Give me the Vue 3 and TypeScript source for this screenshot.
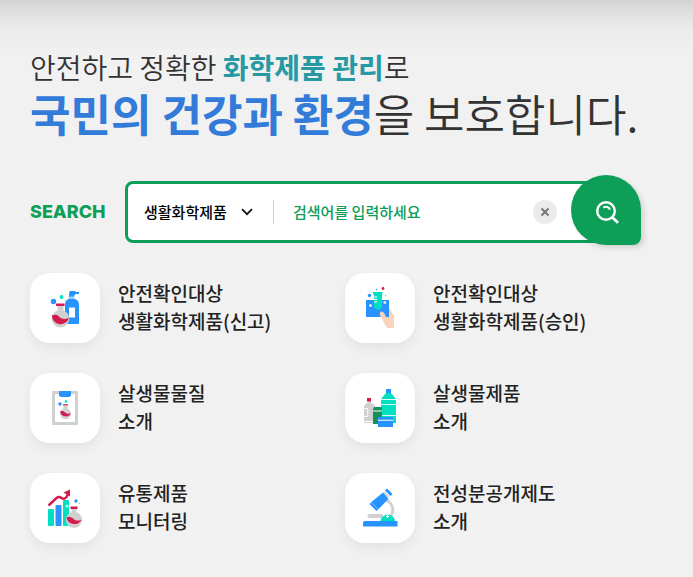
<script setup lang="ts">
import { ref } from 'vue'

interface MenuItem {
  icon: string
  lines: [string, string]
}

const category = ref('생활화학제품')
const keyword = ref('')

const items: MenuItem[] = [
  { icon: 'report', lines: ['안전확인대상', '생활화학제품(신고)'] },
  { icon: 'approve', lines: ['안전확인대상', '생활화학제품(승인)'] },
  { icon: 'substance', lines: ['살생물물질', '소개'] },
  { icon: 'product', lines: ['살생물제품', '소개'] },
  { icon: 'monitor', lines: ['유통제품', '모니터링'] },
  { icon: 'microscope', lines: ['전성분공개제도', '소개'] },
]
</script>

<template>
  <main class="hero">
    <h1 class="headline">
      <span class="lead">안전하고 정확한 <strong>화학제품 관리</strong>로</span>
      <span class="main"><strong>국민의 건강과 환경</strong>을 보호합니다.</span>
    </h1>

    <form class="search" @submit.prevent>
      <label class="search-title" for="keyword">SEARCH</label>
      <div class="search-box">
        <div class="category">
          <select v-model="category" aria-label="검색 분류">
            <option>생활화학제품</option>
          </select>
          <svg class="chevron" width="12" height="8" viewBox="0 0 12 8" aria-hidden="true">
            <path d="M1 1.2 6 6.2 11 1.2" fill="none" stroke="#111" stroke-width="1.7" />
          </svg>
        </div>
        <input id="keyword" v-model="keyword" type="text" placeholder="검색어를 입력하세요" />
        <button class="clear" type="button" aria-label="지우기" @click="keyword = ''">
          <svg width="10" height="10" viewBox="0 0 10 10" aria-hidden="true">
            <path d="M1.5 1.5 8.5 8.5M8.5 1.5 1.5 8.5" stroke="#777" stroke-width="2" />
          </svg>
        </button>
      </div>
      <button class="submit" type="submit" aria-label="검색">
        <svg width="24" height="24" viewBox="0 0 24 24" fill="none" stroke="#fff" aria-hidden="true">
          <circle cx="11" cy="11" r="8.8" stroke-width="2.4" />
          <path d="M17.2 17.2 23 22.8" stroke-width="2.8" />
          <path d="M8.3 7.4C11 6 14 6.900 15 9.600" stroke-width="2.2" />
        </svg>
      </button>
    </form>

    <ul class="menu">
      <li v-for="item in items" :key="item.icon">
        <a href="#">
          <span class="tile">
            <svg v-if="item.icon === 'report'" viewBox="0 0 70 70" aria-hidden="true">
              <path fill="#2793ff" d="M39.500 18h6v1H49v2h-3.500l-1.500 2v2h-5v-3zM38.500 26h6.500c3 1 4 3 4 6v19H35V32c0-3 1-5 3.500-6z" />
              <path fill="#9dcfff" d="M38.500 23.500h6V26h-6z" />
              <path fill="#fff" d="M39 34.500h6v10h-6z" />
              <path fill="#d0d0d0" d="M27.500 33h6v4.500a8.700 8.700 0 1 1-6 0z" />
              <path fill="#d31b4e" d="M26 30.500h8.500v2.500H26zM21.900 42.500c3.500-1.500 5.500-.5 7.600 1.500 2.500 2.500 5.500 2.500 9.500.8A8.700 8.700 0 0 1 21.900 42.500z" />
              <circle cx="23.500" cy="28.500" r="2.700" fill="#2793ff" />
              <circle cx="31.500" cy="24" r="1.900" fill="#00dfc0" />
              <circle cx="35.500" cy="27.500" r=".8" fill="#8bdde8" />
            </svg>

            <svg v-else-if="item.icon === 'approve'" viewBox="0 0 70 70" aria-hidden="true">
              <path fill="#2793ff" d="M21 27h23v17H21z" />
              <path fill="#fad3bd" d="M44 35l3 4 2 5v11h-7c-2-4-4-7-6-11-2-3-1-6 1-5.500s3 3 4 5.500h3z" />
              <path fill="#00dfc0" d="M28 19h9.500v2.500H37v12a4.200 4.200 0 0 1-8 0v-12h-1z" />
              <path stroke="#fff" stroke-width="1" d="M29 24h3M29 26.500h3M29 29h3" />
              <path stroke="#e3f1ff" stroke-width="1.300" d="M24 32.500h3M25.500 31v3M38.300 29.500h3M39.800 28v3" />
              <circle cx="24.500" cy="22.500" r="1.700" fill="#2793ff" />
              <circle cx="31.500" cy="16.500" r=".7" fill="#2793ff" />
              <circle cx="40.500" cy="22.500" r=".7" fill="#72b8fa" />
              <circle cx="38" cy="15.500" r="1.400" fill="#d31b4e" />
            </svg>

            <svg v-else-if="item.icon === 'substance'" viewBox="0 0 70 70" aria-hidden="true">
              <path fill="#fff" stroke="#d0d0d0" stroke-width="3" d="M23.500 19.500h23v31h-23z" />
              <path fill="#2793ff" d="M29 18h12v4.500L39.500 24h-9L29 22.500z" />
              <path fill="#d0d0d0" d="M33.500 33h4v2.500a5.600 5.600 0 1 1-4 0z" />
              <path fill="#d31b4e" d="M33 31.200h5v1.300h-5zM30.200 38.500c2.200-1 3.800-.3 5 1 1.500 1.500 3.300 1.500 5.600.8a5.600 5.600 0 0 1-10.600-1.800z" />
              <circle cx="30" cy="31" r="1.700" fill="#2793ff" />
              <circle cx="36" cy="28.500" r="1.300" fill="#00dfc0" />
              <circle cx="39" cy="28.500" r=".6" fill="#a5e9df" />
            </svg>

            <svg v-else-if="item.icon === 'product'" viewBox="0 0 70 70" aria-hidden="true">
              <path fill="#d0d0d0" d="M22.500 28.500h3.500V30c2.500.5 4 2 4 4v16H19V34c0-2 1.500-3.500 3.500-4z" />
              <path fill="#d31b4e" d="M22 25h4v3.500h-4z" />
              <path fill="none" stroke="#fff" stroke-width="1" d="M19.500 35.500h3.300v8h-3.300M19 48.500h10" />
              <path fill="#2793ff" d="M41 16h5v4h-5z" />
              <path fill="#00dfc0" d="M41 20h5l5 6v24H36V26z" />
              <path stroke="#fff" stroke-width="1" d="M36 31.500h15M36 42.500h15M36 26.500h15" opacity=".85" />
              <path fill="#15925b" d="M29 34h7.500l.5 2v15h-9V36z" />
              <path fill="#fff" d="M28 37.500h9v1h-9z" />
              <path fill="#2793ff" d="M33 44h15v10H33z" />
              <path fill="#d9ecff" d="M33 46.700h15v1.200H33z" />
            </svg>

            <svg v-else-if="item.icon === 'monitor'" viewBox="0 0 70 70" aria-hidden="true">
              <rect x="18" y="36" width="6" height="17" rx="1" fill="#00dfc0" />
              <rect x="25.500" y="32" width="6" height="21" rx="1" fill="#2793ff" />
              <rect x="33" y="27" width="6" height="26" rx="1" fill="#00dfc0" />
              <path fill="none" stroke="#d31b4e" stroke-width="2.400" d="M18.500 32.500l8-7.500q2.500-2 5 0t5-1l2-4" />
              <path fill="#d31b4e" d="M33.500 19.500 40 16.500v7z" />
              <circle cx="37" cy="33" r="1.500" fill="#bff7ec" />
              <path fill="#d0d0d0" d="M41.500 36h5v3.200a8 8 0 1 1-5 0z" />
              <path fill="#d31b4e" d="M40.500 33.500h7V36h-7zM36.500 44.500c3-1.500 5-.3 7 1.500s5 2 8 .7a8 8 0 0 1-15-2.200z" />
              <circle cx="46" cy="28" r="1.700" fill="#2793ff" />
              <circle cx="49.300" cy="30.500" r=".7" fill="#59e4d2" />
            </svg>

            <svg v-else viewBox="0 0 70 70" aria-hidden="true">
              <path fill="none" stroke="#d0d0d0" stroke-width="3" d="M42 27.500c5 3 7 8 5 13q-.8 2-2.500 3.500" />
              <path fill="#d0d0d0" d="M24.500 41H38v4H24.500a2 2 0 0 1 0-4zM39.500 18.500l5 5-1.500 1.500-5-5z" />
              <path fill="#2793ff" d="M38 19.500 43.500 26 33.500 36 31.500 38l-7-7L27 28.500zM42 15.500l5.500 5.500-2 2-5.500-5.500zM18 50q0-2 2-2h32.500v5.500H18z" />
              <path stroke="#95caff" stroke-width=".7" d="M26.500 29.500l6.500 6.500" />
              <path fill="#00dfc0" d="M35.500 48a7.300 7.300 0 0 1 14.500 0z" />
              <path stroke="#fff" stroke-width="1.200" d="M41 43.500h3M42.500 42v3" />
            </svg>
          </span>
          <span class="text">{{ item.lines[0] }}<br />{{ item.lines[1] }}</span>
        </a>
      </li>
    </ul>
  </main>
</template>

<style>
body {
  background: #f1f1f1;
}
</style>

<style scoped>
.hero {
  box-sizing: border-box;
  min-height: 100vh;
  padding: 47px 33px 34px 30px;
  background: linear-gradient(#d4d4d4 0, #dfdfdf 12px, #ebebeb 28px, #f1f1f1 54px);
  color: #333;
  font-family: 'Noto Sans CJK KR', sans-serif;
}

.headline {
  margin: 0;
  font-weight: 350;
}

.headline span {
  display: block;
  white-space: nowrap;
}

.headline strong {
  font-weight: 700;
}

.lead {
  font-size: 28px;
  line-height: 40px;
}

.lead strong {
  color: #2699a3;
}

.main {
  font-size: 44px;
  line-height: 52px;
}

.main strong {
  color: #327bd9;
}

.search {
  display: flex;
  align-items: center;
  margin: 42px 19px 0 0;
}

.search-title {
  width: 95px;
  flex: none;
  color: #0d9e58;
  font-family: Inter, sans-serif;
  font-size: 18px;
  font-weight: 800;
  line-height: 24px;
}

.search-box {
  box-sizing: border-box;
  flex: 1;
  min-width: 0;
  height: 62px;
  display: flex;
  align-items: center;
  padding: 0 68px 0 16px;
  border: 3px solid #0d9e58;
  border-radius: 8px;
  background: #fff;
}

.category {
  display: flex;
  align-items: center;
  width: 129px;
  height: 24px;
  flex: none;
  border-right: 1px solid #ccc;
}

.category select {
  width: 97px;
  height: 24px;
  padding: 0;
  border: 0;
  appearance: none;
  background: transparent;
  color: #000;
  font: 500 15px/24px 'Noto Sans CJK KR', sans-serif;
}

.chevron {
  pointer-events: none;
}

.search-box input {
  flex: 1;
  min-width: 0;
  height: 24px;
  padding: 0 0 0 19px;
  border: 0;
  outline: 0;
  background: transparent;
  color: #0d9e58;
  font: 500 15px/24px 'Noto Sans CJK KR', sans-serif;
}

.search-box input::placeholder {
  color: #0d9e58;
  opacity: 1;
}

.clear {
  display: grid;
  place-items: center;
  width: 24px;
  height: 24px;
  flex: none;
  padding: 0;
  border: 0;
  border-radius: 50%;
  background: #ebebeb;
}

.submit {
  display: grid;
  place-items: center;
  width: 70px;
  height: 70px;
  flex: none;
  margin: -6px 0 -2px -57px;
  padding: 4px 0 0 2px;
  border: 0;
  border-radius: 35px 35px 8px 35px;
  background: #0d9e58;
  box-shadow: 3px 3px 5px rgba(0, 0, 0, 0.12);
}

.menu {
  display: grid;
  grid-template-columns: 1fr 1fr;
  row-gap: 30px;
  margin: 30px 0 0;
  padding: 0;
  list-style: none;
}

.menu a {
  display: flex;
  align-items: center;
  gap: 18px;
  color: #222;
  text-decoration: none;
}

.tile {
  width: 70px;
  height: 70px;
  flex: none;
  border-radius: 20px;
  background: #fff;
  box-shadow: 0 5px 12px rgba(0, 0, 0, 0.06);
}

.tile svg {
  display: block;
  width: 100%;
  height: 100%;
}

.text {
  padding-bottom: 2px;
  font-size: 19px;
  font-weight: 500;
  line-height: 28px;
}
</style>
